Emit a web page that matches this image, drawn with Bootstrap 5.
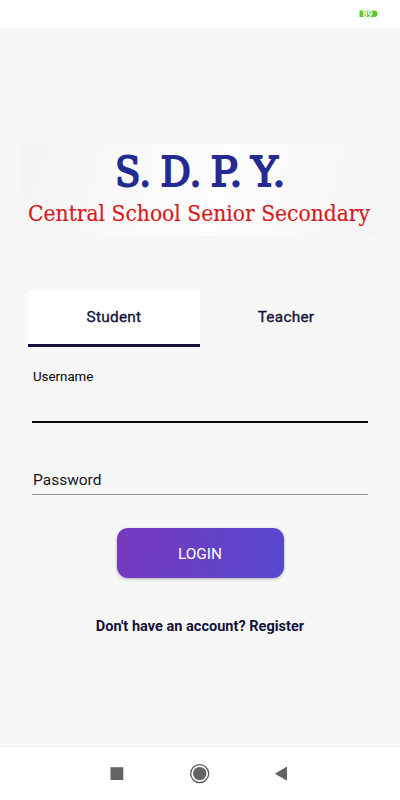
<!DOCTYPE html>
<html lang="en">
<head>
<meta charset="utf-8">
<meta name="viewport" content="width=device-width, initial-scale=1">
<title>Login</title>
<link href="https://cdn.jsdelivr.net/npm/bootstrap@5.3.0/dist/css/bootstrap.min.css" rel="stylesheet">
<style>
body { font-family: Roboto, "Liberation Sans", sans-serif; background: #f7f7f7; color: #15133a; height: 800px; overflow: hidden; }
.status-bar { height: 28px; padding: 10px 22px 0 0; }
.status-bar svg, .school-logo svg, .system-nav svg { display: block; overflow: visible; }
.school-logo { width: 356px; height: 92px; margin: 116px auto 0 22px; background: linear-gradient(105deg, #f4f4f4 0%, #fbfbfb 40%, #fdfdfd 55%, #f5f5f5 100%); }
.role-tabs { margin: 54px 28px 0; }
.role-tabs .nav-link { height: 57px; border-radius: 0; border: 0; border-bottom: 3px solid transparent; padding: 0; line-height: 55px; font-size: 15.4px; font-weight: 400; letter-spacing: .25px; -webkit-text-stroke: .35px #15133a; color: #15133a; }
.role-tabs .nav-link.active { background: #fff; color: #15133a; border-bottom-color: #120f3b; }
.login-form { margin: 0 32px; }
.login-form .form-label { display: block; margin: 0; padding-left: 1px; color: #000; font-size: 13.3px; line-height: 18px; padding-top: 21px; }
.login-form .form-control { border: 0; border-radius: 0; background: transparent; box-shadow: none; padding: 0 1px; color: #15133a; }
.username-field { height: 37px; border-bottom: 2px solid #080808 !important; }
.password-field { height: 30px; margin-top: 42px; font-size: 15.5px; border-bottom: 1px solid #8f8f8f !important; }
.password-field::placeholder { color: #15151f; opacity: 1; }
.login-btn { width: 167px; height: 50px; margin-top: 33px; padding: 9px 0 6px; border: 0; border-radius: 11px; background: linear-gradient(100deg, #763abd, #5748cf); color: #fff; font-size: 15.4px; box-shadow: 0 1px 3px rgba(0,0,0,.3); }
.register-link { margin-top: 38px; font-size: 14.55px; line-height: 22px; color: #15133a; font-weight: 700; }
.system-nav { height: 54px; border-top: 1px solid #eee; }
</style>
</head>
<body class="d-flex flex-column">
<header class="status-bar bg-white d-flex justify-content-end">
  <svg width="19" height="8" viewBox="0 0 19 8" role="img" aria-label="Battery 89 percent">
    <path d="M.5 .5h15q3 0 3 3.3t-3 3.3H.5z" fill="#62c52c"/>
    <text x="3.5" y="7" font-size="8.5" font-weight="700" fill="#fff" textLength="10" lengthAdjust="spacingAndGlyphs">89</text>
  </svg>
</header>
<main class="flex-grow-1 d-flex flex-column">
  <div class="school-logo">
    <svg width="356" height="92" viewBox="22 144 356 92">
      <g font-family="DejaVu Serif, serif" font-size="41.5" fill="#242a91" stroke="#242a91" stroke-width="1.9" stroke-linejoin="round">
        <text x="115" y="186" textLength="36" lengthAdjust="spacingAndGlyphs">S.</text>
        <text x="160.5" y="186" textLength="41" lengthAdjust="spacingAndGlyphs">D.</text>
        <text x="210.5" y="186" textLength="32" lengthAdjust="spacingAndGlyphs">P.</text>
        <text x="251" y="186" textLength="34.5" lengthAdjust="spacingAndGlyphs">Y.</text>
      </g>
      <text x="28" y="221" font-family="DejaVu Serif Condensed, DejaVu Serif, serif" font-size="21.7" fill="#d51a20" stroke="#d51a20" stroke-width=".15" textLength="342" lengthAdjust="spacingAndGlyphs">Central School Senior Secondary</text>
    </svg>
  </div>
  <ul class="role-tabs nav nav-justified">
    <li class="nav-item"><a class="nav-link active" href="#">Student</a></li>
    <li class="nav-item"><a class="nav-link" href="#">Teacher</a></li>
  </ul>
  <form class="login-form d-flex flex-column">
    <label class="form-label" for="username">Username</label>
    <input class="form-control username-field" id="username" type="text">
    <input class="form-control password-field" type="password" placeholder="Password" aria-label="Password">
    <button class="btn login-btn align-self-center" type="button">LOGIN</button>
  </form>
  <a class="register-link text-center text-decoration-none" href="#">Don't have an account? Register</a>
</main>
<nav class="system-nav bg-white d-flex justify-content-center">
  <svg width="220" height="53" viewBox="90 747 220 53" fill="#636363">
    <path d="M110.5 767.2h12.8v12.8h-12.8z"/>
    <circle cx="199.7" cy="773.6" r="9" fill="none" stroke="#555" stroke-width="1.2"/>
    <circle cx="199.7" cy="773.6" r="6.7"/>
    <path d="M274.8 773.7 287 766.5v14.3z"/>
  </svg>
</nav>
<script src="https://cdn.jsdelivr.net/npm/bootstrap@5.3.0/dist/js/bootstrap.bundle.min.js"></script>
</body>
</html>
